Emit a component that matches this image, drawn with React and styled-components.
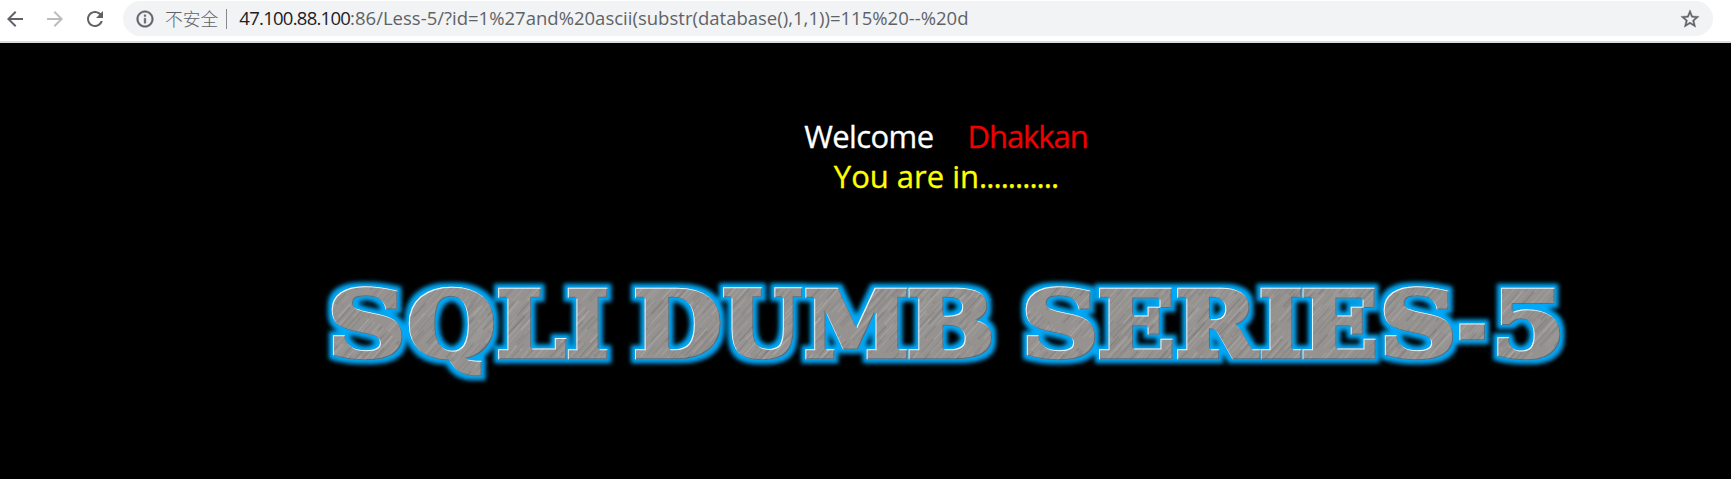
import React from "react";
import styled, { createGlobalStyle } from "styled-components";

const GlobalStyle = createGlobalStyle`
  body { margin: 0; background: #000; overflow: hidden; }
`;

const Page = styled.div`
  display: flex;
  flex-direction: column;
  height: 479px;
  background: #000;
  font-family: "Open Sans", "Noto Sans CJK SC", sans-serif;
`;

const Toolbar = styled.header`
  display: flex;
  align-items: flex-start;
  box-sizing: border-box;
  height: 43px;
  padding: 1px 0 0 3px;
  background: #fff;
  border-bottom: 2px solid #d9dbdd;
`;

const NavButton = styled.button`
  display: flex;
  align-items: center;
  justify-content: center;
  width: 24px;
  height: 35px;
  margin: 0 16px 0 0;
  padding: 0;
  border: 0;
  background: none;
  color: ${(p) => (p.$dim ? "#babcbe" : "#5f6368")};
`;

const AddressBar = styled.div`
  display: flex;
  align-items: center;
  box-sizing: border-box;
  width: 1590px;
  height: 35px;
  padding: 0 12px 0 12px;
  border-radius: 18px;
  background: #f1f3f4;
  color: #5f6368;
`;

const Security = styled.span`
  margin-left: 10px;
  font: 300 17.8px/35px "Noto Sans CJK SC", sans-serif;
`;

const Divider = styled.span`
  width: 1.5px;
  height: 20px;
  margin: 0 12px 0 7.5px;
  background: #85898d;
`;

const Url = styled.span`
  flex: 1;
  padding-bottom: 2px;
  font-size: 18.5px;
  line-height: 33px;
  white-space: nowrap;
  letter-spacing: 0.01px;
  font-variant-ligatures: none;
`;

const Host = styled.span`
  color: #202124;
  letter-spacing: -0.74px;
`;

const Content = styled.main`
  display: flex;
  flex-direction: column;
  align-items: center;
  padding: 73px 0 0 161px;
`;

const Line = styled.div`
  display: flex;
  gap: ${(p) => p.$gap || "0"};
  height: 40px;
  font-size: 31px;
  line-height: 40px;
  white-space: pre;
  color: ${(p) => p.$color};
  letter-spacing: ${(p) => p.$spacing};
  -webkit-text-stroke: 0.3px currentColor;
`;

const Name = styled.span`
  color: #f00000;
  letter-spacing: -1.05px;
`;

const Dots = styled.span`
  letter-spacing: -0.95px;
`;

const Banner = styled.svg`
  display: block;
  align-self: flex-start;
  width: 1270px;
  height: 140px;
  margin: 65px 0 0 149px;
`;

const Icon = ({ size = 24, children }) => (
  <svg width={size} height={size} viewBox="0 0 24 24" fill="currentColor">
    {children}
  </svg>
);

const FONT_SIZE = 92;
const OUTLINE = 4.6;
const FONT = `bold ${FONT_SIZE}px "DejaVu Serif"`;

// Each letter with the left and right edges it fills on the banner.
const LETTERS = [
  ["S", 332, 402], ["Q", 408, 495], ["L", 498, 566.5], ["I", 567.5, 607.5],
  ["D", 635, 720.5], ["U", 723, 803], ["M", 804.5, 907.5], ["B", 908.5, 992],
  ["S", 1026, 1095], ["E", 1099, 1173], ["R", 1177, 1260], ["I", 1260.5, 1301.5],
  ["E", 1302.5, 1376], ["S", 1384, 1453], ["-", 1458, 1486], ["5", 1497, 1561],
];

function fitLetters() {
  const ctx = document.createElement("canvas").getContext("2d");
  ctx.font = FONT;
  return LETTERS.map(([char, left, right]) => {
    const m = ctx.measureText(char);
    const ink = m.actualBoundingBoxRight + m.actualBoundingBoxLeft;
    const scale = (right - left - OUTLINE) / ink;
    return {
      char,
      x: left + OUTLINE / 2 - 310 + m.actualBoundingBoxLeft * scale,
      length: m.width * scale,
    };
  });
}

const STREAKS = Array.from({ length: 190 }, (_, i) => ({
  x: (i * 53) % 149,
  y: (i * 37.3) % 101,
  w: 12 + ((i * 29) % 38),
  h: 0.6 + (i % 3) * 0.4,
  fill: ["#b5b2b0", "#757270", "#a8a5a3", "#807d7b"][(i * 7 + (i >> 2)) % 4],
}));

function DumbBanner() {
  const letters = React.useMemo(fitLetters, []);
  return (
    <Banner viewBox="0 0 1270 140" role="img" aria-label="SQLI DUMB SERIES-5">
      <defs>
        <pattern id="steel" width="150" height="102" patternUnits="userSpaceOnUse" patternTransform="rotate(-48)">
          <rect width="150" height="102" fill="#959290" />
          {STREAKS.map((s, i) => (
            <rect key={i} x={s.x} y={s.y} width={s.w} height={s.h} fill={s.fill} opacity="0.55" />
          ))}
        </pattern>
        <filter id="neon" x="0" y="0" width="1270" height="140" filterUnits="userSpaceOnUse" colorInterpolationFilters="sRGB">
          <feMorphology in="SourceAlpha" operator="dilate" radius="4" result="wide" />
          <feGaussianBlur in="wide" stdDeviation="2.1" result="soft" />
          <feFlood floodColor="#00a8f8" />
          <feComposite in2="soft" operator="in" result="glow" />
          <feOffset in="SourceAlpha" dx="1.1" dy="1.1" result="down" />
          <feFlood floodColor="#e4f8ff" />
          <feComposite in2="SourceAlpha" operator="in" />
          <feComposite in2="down" operator="out" result="light" />
          <feOffset in="SourceAlpha" dx="-0.8" dy="-0.8" result="up" />
          <feFlood floodColor="#285a78" floodOpacity="0.6" />
          <feComposite in2="SourceAlpha" operator="in" />
          <feComposite in2="up" operator="out" result="shade" />
          <feMerge>
            <feMergeNode in="glow" />
            <feMergeNode in="SourceGraphic" />
            <feMergeNode in="shade" />
            <feMergeNode in="light" />
          </feMerge>
        </filter>
      </defs>
      <text
        y="95.5"
        fontFamily="DejaVu Serif, serif"
        fontWeight="bold"
        fontSize={FONT_SIZE}
        fill="url(#steel)"
        stroke="url(#steel)"
        strokeWidth={OUTLINE}
        filter="url(#neon)"
      >
        {letters.map((l, i) => (
          <tspan key={i} x={l.x} textLength={l.length} lengthAdjust="spacingAndGlyphs">
            {l.char}
          </tspan>
        ))}
      </text>
    </Banner>
  );
}

export default function App() {
  return (
    <Page>
      <GlobalStyle />
      <Toolbar>
        <NavButton aria-label="Back">
          <Icon><path d="M20 11H7.83l5.59-5.59L12 4l-8 8 8 8 1.41-1.41L7.83 13H20v-2z" /></Icon>
        </NavButton>
        <NavButton $dim aria-label="Forward">
          <Icon><path d="M12 4l-1.41 1.41L16.17 11H4v2h12.17l-5.58 5.59L12 20l8-8z" /></Icon>
        </NavButton>
        <NavButton aria-label="Reload">
          <Icon>
            <path d="M17.65 6.35C16.2 4.9 14.21 4 12 4c-4.42 0-7.99 3.58-7.99 8s3.57 8 7.99 8c3.73 0 6.84-2.55 7.73-6h-2.08c-.82 2.33-3.04 4-5.65 4-3.31 0-6-2.69-6-6s2.69-6 6-6c1.66 0 3.14.69 4.22 1.78L13 11h7V4l-2.35 2.35z" />
          </Icon>
        </NavButton>
        <AddressBar>
          <Icon size={20}>
            <path stroke="currentColor" strokeWidth="0.5" d="M11 17h2v-6h-2v6zm1-15C6.48 2 2 6.48 2 12s4.48 10 10 10 10-4.48 10-10S17.52 2 12 2zm0 18c-4.41 0-8-3.59-8-8s3.59-8 8-8 8 3.59 8 8-3.59 8-8 8zM11 9h2V7h-2v2z" />
          </Icon>
          <Security>不安全</Security>
          <Divider />
          <Url>
            <Host>47.100.88.100</Host>:86/Less-5/?id=1%27and%20ascii(substr(database(),1,1))=115%20--%20d
          </Url>
          <Icon size={22}>
            <path stroke="currentColor" strokeWidth="0.4" d="M22 9.24l-7.19-.62L12 2 9.19 8.63 2 9.24l5.46 4.73L5.82 21 12 17.27 18.18 21l-1.63-7.03L22 9.24zM12 15.4l-3.76 2.27 1-4.28-3.32-2.88 4.38-.38L12 6.1l1.71 4.04 4.38.38-3.32 2.88 1 4.28L12 15.4z" />
          </Icon>
        </AddressBar>
      </Toolbar>
      <Content>
        <Line $color="#fff" $spacing="-0.6px" $gap="34px">
          <span>Welcome</span>
          <Name>Dhakkan</Name>
        </Line>
        <Line $color="#ffff00" $spacing="0px">
          <span>You are in</span>
          <Dots>...........</Dots>
        </Line>
        <DumbBanner />
      </Content>
    </Page>
  );
}
